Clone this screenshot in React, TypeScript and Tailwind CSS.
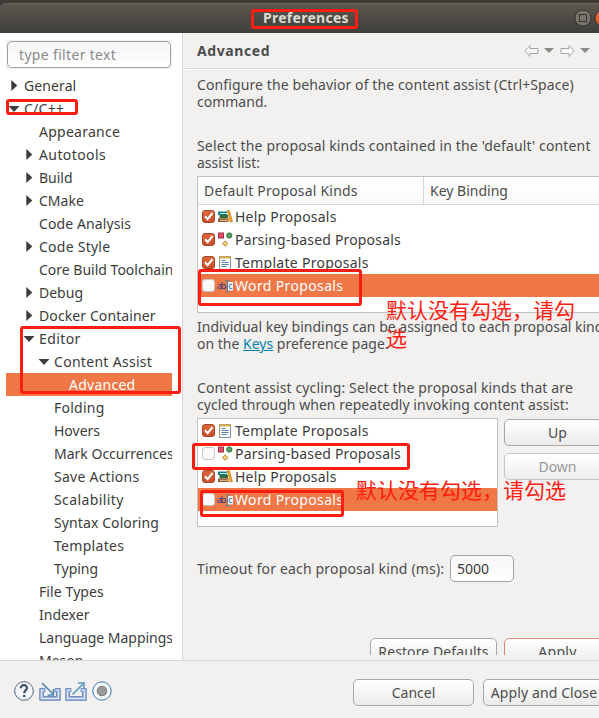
import type { ReactNode } from "react";

type TreeItem = { label: string; depth: number; arrow?: "open" | "closed"; selected?: boolean; tracking?: string };

const tree: TreeItem[] = [
  { label: "General", depth: 0, arrow: "closed", tracking: "tracking-[0.1px]" },
  { label: "C/C++", depth: 0, arrow: "open" },
  { label: "Appearance", depth: 1, tracking: "tracking-[0.25px]" },
  { label: "Autotools", depth: 1, arrow: "closed", tracking: "tracking-[0.4px]" },
  { label: "Build", depth: 1, arrow: "closed", tracking: "tracking-normal" },
  { label: "CMake", depth: 1, arrow: "closed", tracking: "tracking-normal" },
  { label: "Code Analysis", depth: 1, tracking: "tracking-[0.1px]" },
  { label: "Code Style", depth: 1, arrow: "closed", tracking: "tracking-[0.25px]" },
  { label: "Core Build Toolchains", depth: 1, tracking: "tracking-normal" },
  { label: "Debug", depth: 1, arrow: "closed", tracking: "tracking-normal" },
  { label: "Docker Container", depth: 1, arrow: "closed", tracking: "tracking-[0.1px]" },
  { label: "Editor", depth: 1, arrow: "open", tracking: "tracking-[0.4px]" },
  { label: "Content Assist", depth: 2, arrow: "open", tracking: "tracking-[0.3px]" },
  { label: "Advanced", depth: 3, selected: true },
  { label: "Folding", depth: 2 },
  { label: "Hovers", depth: 2, tracking: "tracking-normal" },
  { label: "Mark Occurrences", depth: 2, tracking: "tracking-normal" },
  { label: "Save Actions", depth: 2 },
  { label: "Scalability", depth: 2, tracking: "tracking-[0.4px]" },
  { label: "Syntax Coloring", depth: 2, tracking: "tracking-[0.1px]" },
  { label: "Templates", depth: 2, tracking: "tracking-[0.3px]" },
  { label: "Typing", depth: 2, tracking: "tracking-normal" },
  { label: "File Types", depth: 1, tracking: "tracking-[0.1px]" },
  { label: "Indexer", depth: 1, tracking: "tracking-normal" },
  { label: "Language Mappings", depth: 1, tracking: "tracking-[-0.03px]" },
  { label: "Meson", depth: 1, tracking: "tracking-normal" },
];

const indent = ["pl-[18px]", "pl-[33px]", "pl-[48px]", "pl-[63px]"];

function Arrow({ open }: { open: boolean }) {
  return (
    <svg className="-ml-[16px] mr-[4px] h-3 w-3 shrink-0" viewBox="0 0 12 12" fill="#3c3c3c">
      {open ? <path d="M.5 3h11L6 9z" /> : <path d="M3.3 0v11l6-5.5z" />}
    </svg>
  );
}

function TreeRow({ label, depth, arrow, selected, tracking = "tracking-[0.25px]" }: TreeItem) {
  return (
    <div className={`flex h-[23px] shrink-0 items-center whitespace-nowrap ${indent[depth]} ${selected ? "bg-[#f07746] text-white" : ""}`}>
      {arrow && <Arrow open={arrow === "open"} />}
      <span className={tracking}>{label}</span>
    </div>
  );
}

function Checkbox({ checked }: { checked: boolean }) {
  return (
    <svg className="-mt-px h-[13px] w-[13px] shrink-0" viewBox="0 0 13 13">
      <defs>
        <linearGradient id="check-fill" x2="0" y2="1">
          <stop stopColor="#e2673c" />
          <stop offset="1" stopColor="#c84d26" />
        </linearGradient>
      </defs>
      <rect x=".5" y=".5" width="12" height="12" rx="2.5" fill={checked ? "url(#check-fill)" : "#fbfbfb"} stroke={checked ? "#a5492c" : "#c6c4c1"} />
      {checked && <path d="M3 6.3l2.6 2.9L10.6 3" fill="none" stroke="#fff" strokeWidth="2.1" />}
    </svg>
  );
}

type Kind = "help" | "parsing" | "template" | "word";

function KindIcon({ kind }: { kind: Kind }) {
  return (
    <svg className="ml-[2px] h-4 w-4 shrink-0" viewBox="0 0 16 16">
      {kind === "help" && (
        <>
          <path d="M1 2.5h9v3.5H1z" fill="#138184" />
          <path d="M3 4.5h7" stroke="#c2e4e0" />
          <path d="M2.5 6h8.5v3.5H2.5z" fill="#2f6b3c" />
          <path d="M1 9.5h10.5v3.5H1z" fill="#8f5932" />
          <path d="M3 11.3h8.5" stroke="#e6c8a0" />
          <path d="M10.2 1.8l2-.6 3.3 11.2-2 .7z" fill="#f4a51c" stroke="#b76d13" strokeWidth=".6" />
          <path d="M10.5 7l2 5.4h-2z" fill="#d48b29" />
        </>
      )}
      {kind === "parsing" && (
        <>
          <rect x="1.5" y="1" width="5" height="5" fill="#dc5265" stroke="#a72943" />
          <circle cx="12.3" cy="3.5" r="2.6" fill="#5aa267" stroke="#28713d" />
          <path d="M8.2 9l2.7 2.6-2.7 2.6-2.7-2.6z" fill="#f8d477" stroke="#bd8125" strokeLinejoin="round" />
        </>
      )}
      {kind === "template" && (
        <>
          <rect x="2.5" y="1.5" width="11" height="13" fill="#f8fbff" stroke="#8596b5" />
          <path d="M2 2.5h12" stroke="#d8ae45" strokeWidth="2" />
          <path d="M2.5 1.5v13" stroke="#b09a5c" />
          <path d="M4.5 5.5h4M4.5 7.5h7M4.5 9.5h7M4.5 11.5h5" stroke="#5f7fac" />
        </>
      )}
      {kind === "word" && (
        <>
          <rect x="11" y="4" width="5" height="8.5" fill="#e8f2fc" />
          <text x="-.2" y="11" fontSize="9.5" fontFamily="Noto Sans, sans-serif" fill="#293d84" textLength="9.5">ab</text>
          <text x="11.3" y="11" fontSize="9" fontFamily="Noto Sans, sans-serif" fill="#2675b5">c</text>
          <path d="M8.5 2.5h1.2l.8.8.8-.8h1.2M10.5 3.3v10M8.5 14h1.2l.8-.8.8.8h1.2" fill="none" stroke="#397eb4" strokeWidth=".9" />
        </>
      )}
    </svg>
  );
}

const kinds: Record<Kind, { label: string; tracking: string }> = {
  help: { label: "Help Proposals", tracking: "tracking-[0.22px]" },
  parsing: { label: "Parsing-based Proposals", tracking: "tracking-[0.17px]" },
  template: { label: "Template Proposals", tracking: "tracking-[0.27px]" },
  word: { label: "Word Proposals", tracking: "tracking-[0.36px]" },
};

function ProposalRow({ kind, checked = false, selected = false }: { kind: Kind; checked?: boolean; selected?: boolean }) {
  return (
    <div className={`flex h-[23px] shrink-0 items-center whitespace-nowrap pl-1 ${selected ? "bg-[#f07746] text-white" : "text-[#3c3c3c]"}`}>
      <Checkbox checked={checked} />
      <KindIcon kind={kind} />
      <span className={`ml-[2px] ${kinds[kind].tracking}`}>{kinds[kind].label}</span>
    </div>
  );
}

function Button({ children, className = "" }: { children: ReactNode; className?: string }) {
  return (
    <button className={`flex h-[27px] shrink-0 items-center justify-center whitespace-nowrap rounded-[5px] border bg-linear-to-b from-white to-[#ebebea] ${className}`}>
      {children}
    </button>
  );
}

function NavArrow({ flip = false }: { flip?: boolean }) {
  return (
    <svg className={`h-3 w-[15px] ${flip ? "-scale-x-100" : ""}`} viewBox="0 0 15 12" fill="#f8f8f8" stroke="#a5a5a5">
      <path d="M.8 6L6 .6v2.9h8v5H6v2.9z" strokeLinejoin="round" />
    </svg>
  );
}

function DropArrow() {
  return (
    <svg className="h-[5px] w-[10px]" viewBox="0 0 10 5" fill="#8b8a87">
      <path d="M0 0h10L5 5z" />
    </svg>
  );
}

function Tray({ out = false }: { out?: boolean }) {
  return (
    <svg className="h-5 w-[22px]" viewBox="0 0 22 20">
      <path d="M.7 7.5H6v3.2H4.5v4.8h13v-4.8H16V7.5h5.3v11.8H.7z" fill="#9fb4da" stroke="#6f8fc4" />
      <path d="M5.5 9H2.5v8.5h17V9h-3" fill="none" stroke="#e0e9f6" />
      {out ? (
        <path d="M7.5 13.5L18 3M13 2h6v6" fill="none" stroke="#5d9cc5" strokeWidth="1.6" />
      ) : (
        <path d="M3 2l11 11M14.5 8v6h-6" fill="none" stroke="#4c88b2" strokeWidth="1.6" />
      )}
    </svg>
  );
}

function Mark({ className }: { className: string }) {
  return <div className={`pointer-events-none absolute rounded-[3px] border-3 border-[#ff1c12] ${className}`} />;
}

export default function App() {
  return (
    <div className="relative flex h-[718px] w-[599px] flex-col overflow-hidden bg-[#f2f1f0] font-['Noto_Sans',sans-serif] text-[14px] leading-[17px] text-[#4c4c4c]">
      <header className="flex h-[33px] shrink-0 flex-col bg-[#3c3b37] pt-[3px]">
        <div className="flex flex-1 items-center rounded-tl-[6px] border-t border-[#69665a] bg-linear-to-b from-[#5a574e] to-[#403f3a]">
          <h1 className="-mt-[2px] ml-[263px] w-[86px] whitespace-nowrap text-[14px] font-bold tracking-[0.28px] text-[#dfdbd2]">Preferences</h1>
          <svg className="-mt-[2px] ml-[225px] h-5 w-[25px] shrink-0" viewBox="0 0 25 20">
            <circle cx="9" cy="10" r="8" fill="#77756d" stroke="#34332f" />
            <rect x="5.5" y="6.5" width="7" height="7" fill="none" stroke="#35342f" />
            <circle cx="29" cy="10" r="8" fill="#ec5b2c" stroke="#34332f" />
          </svg>
        </div>
      </header>

      <div className="flex h-[627px] shrink-0">
        <aside className="flex w-[183px] shrink-0 flex-col overflow-hidden border-r border-[#d9d7d5] bg-white pl-[6px] pt-[7px]">
          <div className="w-[166px] shrink-0 bg-[#f2f1f0] p-px">
            <input className="block h-[27px] w-full rounded-[5px] border border-[#a3a19e] bg-linear-to-b from-[#f5f5f5] to-white px-[11px] tracking-[0.33px] placeholder:text-[#8b8b8b] placeholder:opacity-100" placeholder="type filter text" />
          </div>
          <nav className="mt-[5px] flex w-[166px] flex-col overflow-hidden text-[#3c3c3c]">
            {tree.map((item) => <TreeRow key={item.label} {...item} />)}
          </nav>
        </aside>

        <main className="ml-[2px] flex min-w-0 flex-1 flex-col overflow-hidden">
          <div className="flex h-9 shrink-0 items-center border-b border-[#dcdad8] pl-3">
            <h2 className="font-bold tracking-[0.6px]">Advanced</h2>
            <div className="ml-auto mr-[9px] flex items-center gap-x-[5.5px]">
              <NavArrow /><DropArrow /><NavArrow flip /><DropArrow />
            </div>
          </div>
          <div className="flex min-h-0 flex-1 flex-col border-t border-white pl-3">
            <p className="mt-[6px] whitespace-nowrap"><span className="tracking-[0.11px]">Configure the behavior of the content assist (Ctrl+Space)</span><br />command.</p>
            <p className="mt-[27px] whitespace-nowrap"><span className="tracking-[0.15px]">Select the proposal kinds contained in the 'default' content</span><br />assist list:</p>
            <section className="mt-[5px] flex h-[137px] shrink-0 flex-col border border-r-0 border-[#c4c2bf] bg-white">
              <div className="flex h-7 shrink-0 items-stretch border-b border-[#dad8d6] bg-linear-to-b from-white to-[#f9f9f9]">
                <div className="flex w-[226px] items-center border-r border-[#dad8d6] pl-[6px] tracking-[0.2px]">Default Proposal Kinds</div>
                <div className="flex items-center pl-[6px]">Key Binding</div>
              </div>
              <ProposalRow kind="help" checked />
              <ProposalRow kind="parsing" checked />
              <ProposalRow kind="template" checked />
              <ProposalRow kind="word" selected />
            </section>
            <p className="mt-[5px] whitespace-nowrap">Individual key bindings can be assigned to each proposal kind<br />on the <a className="text-[#0781a9] underline">Keys</a> preference page.</p>
            <p className="mt-[27px] whitespace-nowrap"><span className="tracking-[0.13px]">Content assist cycling: Select the proposal kinds that are</span><br /><span className="tracking-[0.04px]">cycled through when repeatedly invoking content assist:</span></p>
            <div className="mt-[5px] flex shrink-0 gap-[6px]">
              <section className="flex h-[109px] w-[301px] shrink-0 flex-col border border-[#c4c2bf] bg-white">
                <ProposalRow kind="template" checked />
                <ProposalRow kind="parsing" />
                <ProposalRow kind="help" checked />
                <ProposalRow kind="word" selected />
              </section>
              <div className="flex flex-col gap-[7px] pt-px">
                <Button className="w-[107px] border-[#aaa8a5]">Up</Button>
                <Button className="w-[107px] border-[#c8c7c5] from-[#efefee] to-[#ededec] text-[#999]">Down</Button>
              </div>
            </div>
            <label className="mt-[28px] flex shrink-0 items-center gap-[6px] whitespace-nowrap">
              <span className="w-[247px] tracking-[0.17px]">Timeout for each proposal kind (ms):</span>
              <input className="h-[27px] w-16 rounded-[5px] border border-[#a3a19e] bg-linear-to-b from-[#f7f7f7] to-white px-[6px] text-[#3c3c3c]" defaultValue="5000" />
            </label>
            <div className="mt-[56px] flex h-[17px] shrink-0 gap-[7px] overflow-hidden pl-[173px]">
              <Button className="w-[127px] border-[#aaa8a5] tracking-[0.1px]">Restore Defaults</Button>
              <Button className="w-[107px] border-[#df8b72] tracking-[0.3px]">Apply</Button>
            </div>
          </div>
        </main>
      </div>

      <footer className="flex flex-1 items-center border-t border-[#d7d5d3] pt-[5px]">
        <div className="-mt-[2px] ml-[14px] flex items-center gap-[4.5px]">
          <svg className="h-5 w-5" viewBox="0 0 20 20">
            <circle cx="10" cy="10" r="9.3" fill="#f5f7fb" stroke="#536482" />
            <path d="M6.8 7.2c0-4.2 6.6-3.8 6.2 0-.2 2-2.7 2.1-2.8 5" fill="none" stroke="#415174" strokeWidth="2.2" />
            <circle cx="10.2" cy="15" r="1.3" fill="#415174" />
          </svg>
          <Tray /><Tray out />
          <svg className="h-5 w-5" viewBox="0 0 20 20">
            <circle cx="10" cy="10" r="9.2" fill="#f4fbff" stroke="#3d76a8" />
            <circle cx="10" cy="10" r="4.8" fill="#999" stroke="#777" />
          </svg>
        </div>
        <div className="ml-auto -mr-[6px] flex gap-[9px]">
          <Button className="w-[121px] border-[#aaa8a5]">Cancel</Button>
          <Button className="w-[122px] border-[#aaa8a5] tracking-[0.1px]">Apply and Close</Button>
        </div>
      </footer>

      <Mark className="left-[251px] top-[9px] h-5 w-[107px]" />
      <Mark className="left-[6px] top-[99px] h-4 w-[72px]" />
      <Mark className="left-[20px] top-[326px] h-[68px] w-[161px]" />
      <Mark className="left-[198px] top-[269px] h-[37px] w-[164px]" />
      <Mark className="left-[192px] top-[443px] h-[27px] w-[218px]" />
      <Mark className="left-[200px] top-[490px] h-[27px] w-[144px]" />
      <p className="absolute left-[386px] top-[295px] w-[192px] font-['Noto_Sans_CJK_SC',sans-serif] text-[21px] font-normal leading-[28px] text-[#ff1c12]">默认没有勾选，请勾选</p>
      <p className="absolute left-[356px] top-[475px] whitespace-nowrap font-['Noto_Sans_CJK_SC',sans-serif] text-[21px] font-normal leading-[29px] text-[#ff1c12]">默认没有勾选，请勾选</p>
    </div>
  );
}
